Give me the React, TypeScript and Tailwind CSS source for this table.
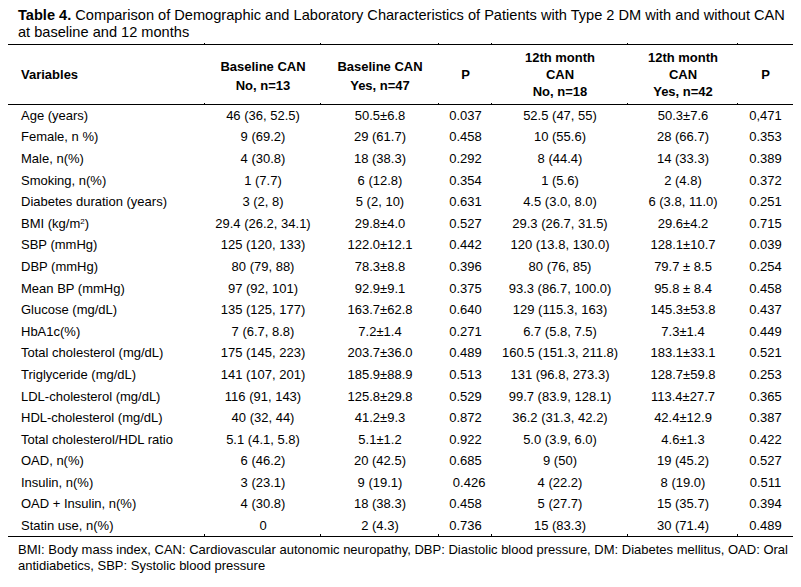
import React from "react";

const rows: [React.ReactNode, string, string, string, string, string, string][] = [
  ["Age (years)", "46 (36, 52.5)", "50.5±6.8", "0.037", "52.5 (47, 55)", "50.3±7.6", "0,471"],
  ["Female, n %)", "9 (69.2)", "29 (61.7)", "0.458", "10 (55.6)", "28 (66.7)", "0.353"],
  ["Male, n(%)", "4 (30.8)", "18 (38.3)", "0.292", "8 (44.4)", "14 (33.3)", "0.389"],
  ["Smoking, n(%)", "1 (7.7)", "6 (12.8)", "0.354", "1 (5.6)", "2 (4.8)", "0.372"],
  ["Diabetes duration (years)", "3 (2, 8)", "5 (2, 10)", "0.631", "4.5 (3.0, 8.0)", "6 (3.8, 11.0)", "0.251"],
  [
    <>
      BMI (kg/m<sup className="text-[8px]">2</sup>)
    </>,
    "29.4 (26.2, 34.1)",
    "29.8±4.0",
    "0.527",
    "29.3 (26.7, 31.5)",
    "29.6±4.2",
    "0.715",
  ],
  ["SBP (mmHg)", "125 (120, 133)", "122.0±12.1", "0.442", "120 (13.8, 130.0)", "128.1±10.7", "0.039"],
  ["DBP (mmHg)", "80 (79, 88)", "78.3±8.8", "0.396", "80 (76, 85)", "79.7 ± 8.5", "0.254"],
  ["Mean BP (mmHg)", "97 (92, 101)", "92.9±9.1", "0.375", "93.3 (86.7, 100.0)", "95.8 ± 8.4", "0.458"],
  ["Glucose (mg/dL)", "135 (125, 177)", "163.7±62.8", "0.640", "129 (115.3, 163)", "145.3±53.8", "0.437"],
  ["HbA1c(%)", "7 (6.7, 8.8)", "7.2±1.4", "0.271", "6.7 (5.8, 7.5)", "7.3±1.4", "0.449"],
  ["Total cholesterol (mg/dL)", "175 (145, 223)", "203.7±36.0", "0.489", "160.5 (151.3, 211.8)", "183.1±33.1", "0.521"],
  ["Triglyceride (mg/dL)", "141 (107, 201)", "185.9±88.9", "0.513", "131 (96.8, 273.3)", "128.7±59.8", "0.253"],
  ["LDL-cholesterol (mg/dL)", "116 (91, 143)", "125.8±29.8", "0.529", "99.7 (83.9, 128.1)", "113.4±27.7", "0.365"],
  ["HDL-cholesterol (mg/dL)", "40 (32, 44)", "41.2±9.3", "0.872", "36.2 (31.3, 42.2)", "42.4±12.9", "0.387"],
  ["Total cholesterol/HDL ratio", "5.1 (4.1, 5.8)", "5.1±1.2", "0.922", "5.0 (3.9, 6.0)", "4.6±1.3", "0.422"],
  ["OAD, n(%)", "6 (46.2)", "20 (42.5)", "0.685", "9 (50)", "19 (45.2)", "0.527"],
  ["Insulin, n(%)", "3 (23.1)", "9 (19.1)", "\u00a0\u00a00.426", "4 (22.2)", "8 (19.0)", "0.511"],
  ["OAD + Insulin, n(%)", "4 (30.8)", "18 (38.3)", "0.458", "5 (27.7)", "15 (35.7)", "0.394"],
  ["Statin use, n(%)", "0", "2 (4.3)", "0.736", "15 (83.3)", "30 (71.4)", "0.489"],
];

function Tick() {
  return <span className="absolute right-0 top-[-2px] h-[2px] w-px bg-black" />;
}

export default function App() {
  return (
    <div
      className="w-[801px] h-[587px] bg-white text-black"
      style={{ fontFamily: '"Liberation Sans", Arial, sans-serif' }}
    >
      <div className="pt-[7px] pl-[18px] pr-1 text-[14.6px] leading-[17px] whitespace-nowrap">
        <span className="font-bold">Table 4.</span> Comparison of Demographic and Laboratory Characteristics of
        Patients with Type 2 DM with and without CAN
        <br />
        at baseline and 12 months
      </div>
      <div className="pl-[8px] mt-[3px]">
        <table className="table-fixed border-collapse w-[785px] text-[13px]">
          <colgroup>
            <col className="w-[197px]" />
            <col className="w-[116px]" />
            <col className="w-[118px]" />
            <col className="w-[53px]" />
            <col className="w-[136px]" />
            <col className="w-[110px]" />
            <col className="w-[55px]" />
          </colgroup>
          <thead>
            <tr className="h-[60px] border-t border-b border-black font-bold">
              <th className="relative text-left pl-[13px] font-bold">
                Variables
                <Tick />
              </th>
              <th className="relative text-center leading-[19px] pt-[2px]">
                Baseline CAN
                <br />
                No, n=13
                <Tick />
              </th>
              <th className="relative text-center leading-[19px] pt-[2px]">
                Baseline CAN
                <br />
                Yes, n=47
                <Tick />
              </th>
              <th className="relative text-center">
                P
                <Tick />
              </th>
              <th className="relative text-center leading-[17px]">
                12th month
                <br />
                CAN
                <br />
                No, n=18
                <Tick />
              </th>
              <th className="relative text-center leading-[17px]">
                12th month
                <br />
                CAN
                <br />
                Yes, n=42
                <Tick />
              </th>
              <th className="text-center">P</th>
            </tr>
          </thead>
          <tbody>
            {rows.map((r, i) => (
              <tr key={i} className={"h-[21.6px] " + (i === rows.length - 1 ? "border-b border-black" : "")}>
                {r.map((c, j) => (
                  <td
                    key={j}
                    className={
                      "p-0 whitespace-nowrap leading-[15px] " +
                      (j === 0 ? "text-left pl-[13px]" : "text-center") +
                      ((i === 0 || i === rows.length - 1) && j < 6 ? " relative" : "")
                    }
                  >
                    {c}
                    {i === 0 && j < 6 ? <span className="absolute right-0 top-[-2px] h-[2px] w-px bg-black" /> : null}
                    {i === rows.length - 1 && j < 6 ? (
                      <span className="absolute right-0 bottom-0 h-[2px] w-px bg-black" />
                    ) : null}
                  </td>
                ))}
              </tr>
            ))}
          </tbody>
        </table>
      </div>
      <div className="pl-[18px] pr-2 mt-[5px] text-[13px] leading-[16px]">
        BMI: Body mass index, CAN: Cardiovascular autonomic neuropathy, DBP: Diastolic blood pressure, DM: Diabetes
        mellitus, OAD: Oral antidiabetics, SBP: Systolic blood pressure
      </div>
    </div>
  );
}
